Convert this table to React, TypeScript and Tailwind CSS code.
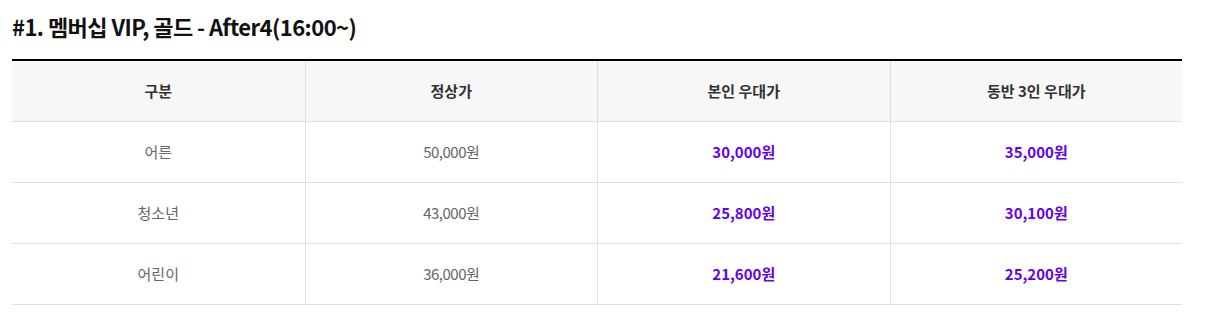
import React from 'react';

const rows = [
  { label: '어른', normal: '50,000원', self: '30,000원', group: '35,000원' },
  { label: '청소년', normal: '43,000원', self: '25,800원', group: '30,100원' },
  { label: '어린이', normal: '36,000원', self: '21,600원', group: '25,200원' },
];

const headers = ['구분', '정상가', '본인 우대가', '동반 3인 우대가'];

export default function App() {
  return (
    <div
      className="w-[1206px] h-[331px] bg-white px-3 pt-[11px]"
      style={{ fontFamily: '"Noto Sans CJK KR", "Noto Sans", sans-serif' }}
    >
      <h2 className="text-[22px] font-bold leading-[30px] tracking-[-0.55px] text-[#111]">
        #1. 멤버십 VIP, 골드 - After4(16:00~)
      </h2>

      {/* price table */}
      <div className="mt-[18px] w-[1170px] border-t-2 border-black">
        <div className="grid grid-cols-4 bg-[#f7f7f7] border-b border-[#e0e0e0]">
          {headers.map((h, i) => (
            <div
              key={h}
              className={`h-[60px] flex items-center justify-center text-[15px] font-bold text-[#333] ${i > 0 ? 'border-l border-[#e0e0e0]' : ''}`}
            >
              {h}
            </div>
          ))}
        </div>
        {rows.map(r => (
          <div key={r.label} className="grid grid-cols-4 border-b border-[#e0e0e0]">
            <div className="h-[60px] flex items-center justify-center text-[15px] text-[#666]">{r.label}</div>
            <div className="h-[60px] flex items-center justify-center text-[15px] text-[#666] border-l border-[#e0e0e0] tracking-[-0.5px]">{r.normal}</div>
            <div className="h-[60px] flex items-center justify-center text-[15px] font-bold text-[#6200f0] border-l border-[#e0e0e0]">{r.self}</div>
            <div className="h-[60px] flex items-center justify-center text-[15px] font-bold text-[#6200f0] border-l border-[#e0e0e0]">{r.group}</div>
          </div>
        ))}
      </div>
    </div>
  );
}
